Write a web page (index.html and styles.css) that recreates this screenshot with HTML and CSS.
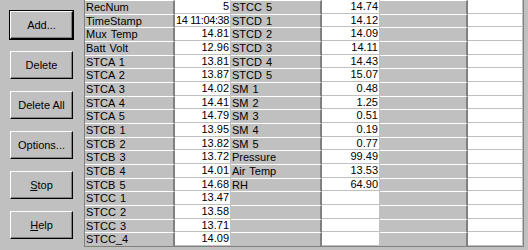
FILE: index.html
```html
<!DOCTYPE html>
<html lang="en">
<head>
  <meta charset="UTF-8">
  <title>Logger Data</title>
  <link rel="stylesheet" href="styles.css">
</head>
<body>
  <div class="window">
    <div class="buttons">
      <button class="btn default">Add...</button>
      <button class="btn">Delete</button>
      <button class="btn">Delete All</button>
      <button class="btn">Options...</button>
      <button class="btn"><u>S</u>top</button>
      <button class="btn"><u>H</u>elp</button>
    </div>

    <div class="grid" id="grid"></div>
  </div>

  <script>
    const data = [
      ['RecNum', '5', 'STCC 5', '14.74'],
      ['TimeStamp', '14 11:04:38', 'STCD 1', '14.12'],
      ['Mux Temp', '14.81', 'STCD 2', '14.09'],
      ['Batt Volt', '12.96', 'STCD 3', '14.11'],
      ['STCA 1', '13.81', 'STCD 4', '14.43'],
      ['STCA 2', '13.87', 'STCD 5', '15.07'],
      ['STCA 3', '14.02', 'SM 1', '0.48'],
      ['STCA 4', '14.41', 'SM 2', '1.25'],
      ['STCA 5', '14.79', 'SM 3', '0.51'],
      ['STCB 1', '13.95', 'SM 4', '0.19'],
      ['STCB 2', '13.82', 'SM 5', '0.77'],
      ['STCB 3', '13.72', 'Pressure', '99.49'],
      ['STCB 4', '14.01', 'Air Temp', '13.53'],
      ['STCB 5', '14.68', 'RH', '64.90'],
      ['STCC 1', '13.47', '', ''],
      ['STCC 2', '13.58', '', ''],
      ['STCC 3', '13.71', '', ''],
      ['STCC_4', '14.09', '', '']
    ];

    const grid = document.getElementById('grid');

    data.forEach(row => {
      // two filled label/value pairs, then an empty pair
      const cells = [row[0], row[1], row[2], row[3], '', ''];
      cells.forEach((text, i) => {
        const cell = document.createElement('div');
        cell.className = i % 2 === 0 ? 'label' : 'value';
        if (text.length > 8) cell.classList.add('long');
        cell.textContent = text;
        grid.appendChild(cell);
      });
    });
  </script>
</body>
</html>
```
FILE: styles.css
```css
body {
  margin: 0;
  background-color: #c0c0c0;
  font-family: "Liberation Sans", Arial, sans-serif;
  font-size: 11px;
}

.window {
  display: flex;
  height: 250px;
  width: 528px;
  overflow: hidden;
}

.buttons {
  width: 63px;
  padding: 11px 0 0 10px;
  margin-right: 11px;
  display: flex;
  flex-direction: column;
  gap: 12px;
}

.btn {
  height: 28px;
  width: 63px;
  padding: 0;
  background-color: #c0c0c0;
  font-family: "Liberation Sans", Arial, sans-serif;
  font-size: 11px;
  color: #000;
  border: 1px solid;
  border-color: #fff #000 #000 #fff;
  box-shadow: inset -1px -1px 0 #808080;
}

.btn.default {
  outline: 1px solid #000;
}

.grid {
  display: grid;
  grid-template-columns: 90px 56px 91px 58px 88px 55px;
  grid-template-rows: repeat(18, 1fr);
  height: 246px;
  border-left: 1px solid #808080;
  border-right: 1px solid #808080;
  border-bottom: 1px solid #808080;
  background-color: #fff;
}

.label,
.value {
  box-sizing: border-box;
  white-space: pre;
  overflow: hidden;
  line-height: 12px;
  word-spacing: 1px;
}

.label {
  background-color: #c0c0c0;
  border-top: 1px solid #fff;
  border-right: 2px solid #808080;
  padding-left: 1px;
}

.value {
  background-color: #fff;
  border-bottom: 1px solid #c0c0c0;
  border-right: 1px solid #c0c0c0;
  text-align: right;
  padding-right: 1px;
}

.value.long {
  letter-spacing: -0.4px;
  word-spacing: 0;
}
```
